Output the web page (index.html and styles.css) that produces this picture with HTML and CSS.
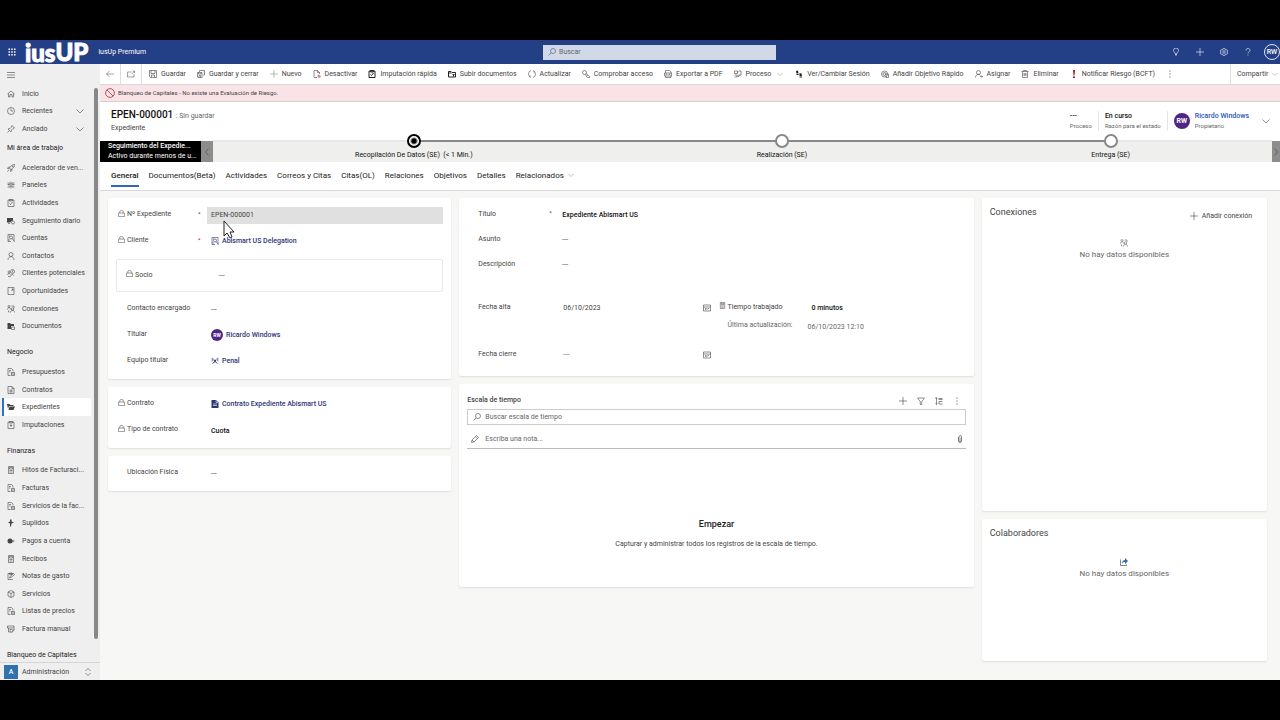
FILE: index.html
```html
<!DOCTYPE html>
<html lang="es">

<head>
    <meta charset="UTF-8">
    <meta name="viewport" content="width=device-width, initial-scale=1.0">
    <title>Expediente EPEN-000001 - iusUp Premium</title>
    <link rel="stylesheet" href="styles.css">
</head>

<body>
    <!-- Icon sprite -->
    <svg class="sprite" xmlns="http://www.w3.org/2000/svg">
        <symbol id="i-waffle" viewBox="0 0 16 16"><path class="solid" d="M1 1h3v3H1zM6.500 1h3v3h-3zM12 1h3v3h-3zM1 6.500h3v3H1zM6.500 6.500h3v3h-3zM12 6.500h3v3h-3zM1 12h3v3H1zM6.500 12h3v3h-3zM12 12h3v3h-3z"/></symbol>
        <symbol id="i-menu" viewBox="0 0 16 16"><path d="M0 3h16M0 8h16M0 13h16"/></symbol>
        <symbol id="i-down" viewBox="0 0 16 16"><path d="M1 5l7 7 7-7"/></symbol>
        <symbol id="i-left" viewBox="0 0 16 16"><path d="M11 1L5 8l6 7"/></symbol>
        <symbol id="i-right" viewBox="0 0 16 16"><path d="M5 1l6 7-6 7"/></symbol>
        <symbol id="i-updown" viewBox="0 0 16 16"><path d="M3 6l5-5 5 5M3 10l5 5 5-5"/></symbol>
        <symbol id="i-search" viewBox="0 0 16 16"><circle cx="10" cy="6" r="5"/><path d="M6.500 9.500L1 15"/></symbol>
        <symbol id="i-bulb" viewBox="0 0 16 16"><path d="M6 11c0-2-3-3-3-6a5 5 0 0 1 10 0c0 3-3 4-3 6zM6 13h4M7 15h2"/></symbol>
        <symbol id="i-plus" viewBox="0 0 16 16"><path d="M8 0v16M0 8h16"/></symbol>
        <symbol id="i-gear" viewBox="0 0 16 16"><circle cx="8" cy="8" r="2.500"/><path d="M6.500 1h3l.5 2 2 1 2-.5 1.500 2.500-1.500 2 1.500 2-1.500 2.500-2-.5-2 1-.5 2h-3l-.5-2-2-1-2 .5L.5 10 2 8 .5 6 2 3.500l2 .5 2-1z"/></symbol>
        <symbol id="i-help" viewBox="0 0 16 16"><path d="M4 5c0-6 8-5 8-.5C12 7.500 8 7.500 8 11M8 13v2"/></symbol>
        <symbol id="i-home" viewBox="0 0 16 16"><path d="M1 8l7-6 7 6M3 7v7h3v-5h4v5h3V7"/></symbol>
        <symbol id="i-clock" viewBox="0 0 16 16"><circle cx="8" cy="8" r="7"/><path d="M8 3v5h4"/></symbol>
        <symbol id="i-pin" viewBox="0 0 16 16"><path d="M10 1l5 5-3 1-3 3-1 4-6-6 4-1 3-3zM5 11l-4 4"/></symbol>
        <symbol id="i-rocket" viewBox="0 0 16 16"><path d="M15 1c-5 0-8 3-10 7l3 3c4-2 7-5 7-10zM6 6H3L1 9h4M10 10v3l-3 2v-4M4 11l-3 4"/><circle cx="11" cy="5" r="1"/></symbol>
        <symbol id="i-panels" viewBox="0 0 16 16"><path d="M1 4h5v3H1M15 4h-5v3h5M8 1v14M1 12h5V9M15 12h-5V9M3 7v2M13 7v2"/></symbol>
        <symbol id="i-clip" viewBox="0 0 16 16"><path d="M2 2h12v13H2zM5 1h6v3H5zM5 9l2 2 4-5"/></symbol>
        <symbol id="i-task" viewBox="0 0 16 16"><path d="M2 2h12v13H2zM5 1h6v3H5zM8 6v6M6 9h4"/></symbol>
        <symbol id="i-note" viewBox="0 0 16 16"><path d="M12 15H2V3h11M5 2h5v3H5zM5 12l1-3 7-6 2 2-7 6z"/></symbol>
        <symbol id="i-daily" viewBox="0 0 16 16"><path class="solid" d="M0 2h12v5a5 5 0 0 0-5 4H0z"/><circle cx="12" cy="11" r="3"/><path d="M2 13h4"/></symbol>
        <symbol id="i-account" viewBox="0 0 16 16"><path d="M8 15H2V1h12v14M4 4h2"/><circle cx="8" cy="7" r="3"/><path d="M10 9l5 6M2 12h4"/></symbol>
        <symbol id="i-person" viewBox="0 0 16 16"><circle cx="8" cy="5" r="4"/><path d="M2 16c0-9 12-9 12 0"/></symbol>
        <symbol id="i-lead" viewBox="0 0 16 16"><circle cx="11" cy="5" r="4"/><circle cx="4" cy="6" r="2"/><path d="M1 12c1-4 5-4 6-1M7 15c0-3 5-6 6-2M2 15h5M11 3v4"/></symbol>
        <symbol id="i-opp" viewBox="0 0 16 16"><path d="M2 1h12v14H2zM9 8l3-4M12 7V4H9"/></symbol>
        <symbol id="i-connect" viewBox="0 0 16 16"><circle cx="4" cy="3" r="2"/><path d="M1 9c0-5 6-5 6 0M9 2h5v4"/><circle cx="11" cy="8" r="2.500"/><path d="M7 15c0-6 8-6 8 0M3 11v3h2"/></symbol>
        <symbol id="i-folder" viewBox="0 0 16 16"><path class="solid" d="M1 2h5l2 2h6v4H8v6H1z"/><path d="M9 10h6v5H9z"/></symbol>
        <symbol id="i-upload" viewBox="0 0 16 16"><path d="M1 14V3h5l2 2h7v9zM1 6h6M11 13V8M9 10l2-2 2 2"/></symbol>
        <symbol id="i-files" viewBox="0 0 16 16"><path class="solid" d="M0 2h5l2 2h6v2H4l-2 6zM5 7h11l-3 7H3z"/></symbol>
        <symbol id="i-doclock" viewBox="0 0 16 16"><path d="M7 15H2V1h7l3 3v3M4 5h4M4 8h3M9 9h6v6H9zM9 12h6"/></symbol>
        <symbol id="i-doc" viewBox="0 0 16 16"><path d="M2 1h8l4 4v10H2zM10 1v4h4M5 8h6M5 10h6M5 12h6"/></symbol>
        <symbol id="i-calc" viewBox="0 0 16 16"><path d="M3 1h10v14H3zM5 3h6v3H5zM5 9h6M5 12h6"/></symbol>
        <symbol id="i-flag" viewBox="0 0 16 16"><path class="solid" d="M6 1h3v4l5 2-5 2-1 6H6V9L2 7l4-2z"/></symbol>
        <symbol id="i-coins" viewBox="0 0 16 16"><circle class="solid" cx="6" cy="8" r="5"/><path d="M9 8h6M12 6v5"/></symbol>
        <symbol id="i-box" viewBox="0 0 16 16"><path d="M8 1l6 3v8l-6 3-6-3V4zM2 4l6 3 6-3M8 7v8"/></symbol>
        <symbol id="i-manual" viewBox="0 0 16 16"><path d="M1 2h13v4H1zM3 6v8h5M5 9h6M5 12h3M15 7l-5 6-1 2 2-1 4-5"/></symbol>
        <symbol id="i-back" viewBox="0 0 16 16"><path d="M16 8H1M7 2L1 8l6 6"/></symbol>
        <symbol id="i-popout" viewBox="0 0 16 16"><path d="M9 4H1v10h13V8M10 8l5-6M11 2h4v4"/></symbol>
        <symbol id="i-save" viewBox="0 0 16 16"><path d="M1 1h14v14H3l-2-2zM4 1v6h8V1M5 15v-5h6v5"/></symbol>
        <symbol id="i-saveclose" viewBox="0 0 16 16"><path d="M5 1h10v9h-3M5 1v3M1 5h9v10H2l-1-1zM3 5v3h5V5M4 15v-4h3v4M12 4h1"/></symbol>
        <symbol id="i-deact" viewBox="0 0 16 16"><path d="M8 15H2V1h7l4 4v3M9 1v4h4"/><path class="red" d="M10 11a2.500 2.500 0 1 1 0 3zM10 10l4 5"/></symbol>
        <symbol id="i-refresh" viewBox="0 0 16 16"><path d="M10 15a7 7 0 0 0 1-13M12 5V1M6 1a7 7 0 0 0-1 13M4 11v4"/></symbol>
        <symbol id="i-key" viewBox="0 0 16 16"><circle cx="5" cy="5" r="4"/><path d="M8 7l7 6v2h-4l-5-6M9 12l3-2"/></symbol>
        <symbol id="i-pdf" viewBox="0 0 16 16"><path d="M3 6V1h8l3 3v2M1 6h14v6H1zM3 12v3h11v-3M4 10V8h2M8 8v2M11 10V8h2"/></symbol>
        <symbol id="i-process" viewBox="0 0 16 16"><path d="M1 2h6v5H1zM9 2h5v8H9M1 10h5v4H1M7 4h2M8 14l5-4M6 12h4"/></symbol>
        <symbol id="i-steps" viewBox="0 0 16 16"><path class="solid" d="M2 2l4-1 1 6H3zM3 8h4v2H3zM9 6l4 1 1 5H9zM9 13h5v2H9z"/></symbol>
        <symbol id="i-target" viewBox="0 0 16 16"><circle cx="7" cy="8" r="6"/><circle cx="7" cy="8" r="3"/><path d="M7 8h8v7h-5v-4"/></symbol>
        <symbol id="i-assign" viewBox="0 0 16 16"><circle cx="7" cy="5" r="4"/><path d="M1 15c0-7 8-8 10-4M10 13h5M13 11l2 2-2 2"/></symbol>
        <symbol id="i-trash" viewBox="0 0 16 16"><path d="M1 3h14M5 3V1h6v2M3 3v12h10V3M6 6v6M8 6v6M10 6v6"/></symbol>
        <symbol id="i-alert" viewBox="0 0 16 16"><path class="redfill" d="M6 0h4L9 11H7zM6 13h4v3H6z"/></symbol>
        <symbol id="i-dots" viewBox="0 0 16 16"><path class="solid" d="M7 1h2v2H7zM7 7h2v2H7zM7 13h2v2H7z"/></symbol>
        <symbol id="i-block" viewBox="0 0 16 16"><circle cx="8" cy="8" r="7"/><path d="M3 3l10 10"/></symbol>
        <symbol id="i-lock" viewBox="0 0 16 16"><path d="M1 7h14v8H1zM4 7V4q0-3 4-3t4 3v3"/></symbol>
        <symbol id="i-team" viewBox="0 0 16 16"><circle cx="3" cy="4" r="1.500"/><circle cx="13" cy="4" r="1.500"/><circle class="solid" cx="8" cy="7" r="2"/><path d="M1 8l3-1M15 8l-3-1M3 14l3-4h4l3 4M5 6l6 5M11 6l-6 5"/></symbol>
        <symbol id="i-contract" viewBox="0 0 16 16"><path class="solid" d="M1 0h9l5 5v11H1z"/><path class="knock" d="M4 8h8M4 11h8M10 1v4h4"/></symbol>
        <symbol id="i-calendar" viewBox="0 0 16 16"><path d="M1 2h14v12H1zM1 6h14M4 9h2M7 9h2M10 9h2M4 11h2M7 11h2"/></symbol>
        <symbol id="i-filter" viewBox="0 0 16 16"><path d="M1 2h14L9.500 9v6h-3V9z"/></symbol>
        <symbol id="i-sort" viewBox="0 0 16 16"><path d="M3 1v14M1 13l2 2 2-2M0 2h5M7 3h8M7 5h8M8 9h7M8 14h7M8 9v5"/></symbol>
        <symbol id="i-pencil" viewBox="0 0 16 16"><path d="M1 15l1-5 9-9 4 4-9 9zM9 3l4 4M2 10l4 4"/></symbol>
        <symbol id="i-attach" viewBox="0 0 16 16"><path d="M5 4v8q0 3 3 3t3-3V4q0-3-2.500-3T6 4v7q0 2 2 2t2-2V5"/></symbol>
        <symbol id="i-share" viewBox="0 0 16 16"><path class="dark" d="M1 3v12h12v-2"/><path class="solid" d="M4 12c0-6 3-8 6-8V0l6 6-6 6V8c-3 0-5 1-6 4z"/></symbol>
    </svg>

    <div class="app">
        <header class="topbar">
            <div class="brand">
                <button class="icon-btn" type="button" aria-label="Aplicaciones"><svg class="icon"><use href="#i-waffle"/></svg></button>
                <a class="logo" href="#">ius<span class="logo-up">Up</span></a>
                <a class="app-name" href="#">iusUp Premium</a>
            </div>
            <label class="global-search">
                <svg class="icon"><use href="#i-search"/></svg>
                <input type="search" placeholder="Buscar" aria-label="Buscar">
            </label>
            <div class="top-actions">
                <button class="icon-btn" type="button" aria-label="Novedades"><svg class="icon"><use href="#i-bulb"/></svg></button>
                <button class="icon-btn" type="button" aria-label="Crear"><svg class="icon"><use href="#i-plus"/></svg></button>
                <button class="icon-btn" type="button" aria-label="Ajustes"><svg class="icon"><use href="#i-gear"/></svg></button>
                <button class="icon-btn" type="button" aria-label="Ayuda"><svg class="icon"><use href="#i-help"/></svg></button>
                <button class="user" type="button">RW</button>
            </div>
        </header>

        <aside class="sidebar">
            <div class="sidebar-scroll">
                <nav class="menu">
                    <button class="menu-toggle" type="button" aria-label="Menú"><svg class="icon"><use href="#i-menu"/></svg></button>
                    <a href="#"><svg class="icon"><use href="#i-home"/></svg><span>Inicio</span></a>
                    <a href="#"><svg class="icon"><use href="#i-clock"/></svg><span>Recientes</span><svg class="icon more"><use href="#i-down"/></svg></a>
                    <a href="#"><svg class="icon"><use href="#i-pin"/></svg><span>Anclado</span><svg class="icon more"><use href="#i-down"/></svg></a>
                    <h2>Mi área de trabajo</h2>
                    <a href="#"><svg class="icon"><use href="#i-rocket"/></svg><span>Acelerador de ven...</span></a>
                    <a href="#"><svg class="icon"><use href="#i-panels"/></svg><span>Paneles</span></a>
                    <a href="#"><svg class="icon"><use href="#i-clip"/></svg><span>Actividades</span></a>
                    <a href="#"><svg class="icon"><use href="#i-daily"/></svg><span>Seguimiento diario</span></a>
                    <a href="#"><svg class="icon"><use href="#i-account"/></svg><span>Cuentas</span></a>
                    <a href="#"><svg class="icon"><use href="#i-person"/></svg><span>Contactos</span></a>
                    <a href="#"><svg class="icon"><use href="#i-lead"/></svg><span>Clientes potenciales</span></a>
                    <a href="#"><svg class="icon"><use href="#i-opp"/></svg><span>Oportunidades</span></a>
                    <a href="#"><svg class="icon"><use href="#i-connect"/></svg><span>Conexiones</span></a>
                    <a href="#"><svg class="icon"><use href="#i-folder"/></svg><span>Documentos</span></a>
                    <h2 class="spaced">Negocio</h2>
                    <a href="#"><svg class="icon"><use href="#i-doclock"/></svg><span>Presupuestos</span></a>
                    <a href="#"><svg class="icon"><use href="#i-doc"/></svg><span>Contratos</span></a>
                    <a class="active" href="#"><svg class="icon"><use href="#i-files"/></svg><span>Expedientes</span></a>
                    <a href="#"><svg class="icon"><use href="#i-task"/></svg><span>Imputaciones</span></a>
                    <h2 class="spaced">Finanzas</h2>
                    <a href="#"><svg class="icon"><use href="#i-calc"/></svg><span>Hitos de Facturaci...</span></a>
                    <a href="#"><svg class="icon"><use href="#i-doclock"/></svg><span>Facturas</span></a>
                    <a href="#"><svg class="icon"><use href="#i-doclock"/></svg><span>Servicios de la fac...</span></a>
                    <a href="#"><svg class="icon"><use href="#i-flag"/></svg><span>Suplidos</span></a>
                    <a href="#"><svg class="icon"><use href="#i-coins"/></svg><span>Pagos a cuenta</span></a>
                    <a href="#"><svg class="icon"><use href="#i-calc"/></svg><span>Recibos</span></a>
                    <a href="#"><svg class="icon"><use href="#i-note"/></svg><span>Notas de gasto</span></a>
                    <a href="#"><svg class="icon"><use href="#i-box"/></svg><span>Servicios</span></a>
                    <a href="#"><svg class="icon"><use href="#i-doclock"/></svg><span>Listas de precios</span></a>
                    <a href="#"><svg class="icon"><use href="#i-manual"/></svg><span>Factura manual</span></a>
                    <h2 class="last">Blanqueo de Capitales</h2>
                </nav>
                <div class="scroll-thumb"></div>
            </div>
            <button class="area" type="button">
                <span class="area-badge">A</span>
                <span class="area-name">Administración</span>
                <svg class="icon"><use href="#i-updown"/></svg>
            </button>
        </aside>

        <main class="main">
            <div class="commands">
                <button class="nav-btn" type="button" aria-label="Atrás"><svg class="icon"><use href="#i-back"/></svg></button>
                <button class="nav-btn" type="button" aria-label="Abrir en ventana nueva"><svg class="icon"><use href="#i-popout"/></svg></button>
                <div class="command-list">
                    <button type="button"><svg class="icon"><use href="#i-save"/></svg>Guardar</button>
                    <button type="button"><svg class="icon"><use href="#i-saveclose"/></svg>Guardar y cerrar</button>
                    <button type="button"><svg class="icon green"><use href="#i-plus"/></svg>Nuevo</button>
                    <button type="button"><svg class="icon"><use href="#i-deact"/></svg>Desactivar</button>
                    <button type="button"><svg class="icon strong"><use href="#i-clip"/></svg>Imputación rápida</button>
                    <button type="button"><svg class="icon strong"><use href="#i-upload"/></svg>Subir documentos</button>
                    <button type="button"><svg class="icon"><use href="#i-refresh"/></svg>Actualizar</button>
                    <button type="button"><svg class="icon"><use href="#i-key"/></svg>Comprobar acceso</button>
                    <button type="button"><svg class="icon"><use href="#i-pdf"/></svg>Exportar a PDF</button>
                    <button type="button"><svg class="icon"><use href="#i-process"/></svg>Proceso<svg class="icon chevron"><use href="#i-down"/></svg></button>
                    <button type="button"><svg class="icon strong"><use href="#i-steps"/></svg>Ver/Cambiar Sesión</button>
                    <button type="button"><svg class="icon"><use href="#i-target"/></svg>Añadir Objetivo Rápido</button>
                    <button type="button"><svg class="icon"><use href="#i-assign"/></svg>Asignar</button>
                    <button type="button"><svg class="icon"><use href="#i-trash"/></svg>Eliminar</button>
                    <button type="button"><svg class="icon"><use href="#i-alert"/></svg>Notificar Riesgo (BCFT)</button>
                    <button type="button" aria-label="Más comandos"><svg class="icon"><use href="#i-dots"/></svg></button>
                </div>
                <button class="share" type="button">Compartir<svg class="icon chevron"><use href="#i-down"/></svg></button>
            </div>

            <div class="notice">
                <svg class="icon"><use href="#i-block"/></svg>
                <span>Blanqueo de Capitales - No existe una Evaluación de Riesgo.</span>
            </div>

            <div class="record">
                <div class="record-title">
                    <h1>EPEN-000001 <small>: Sin guardar</small></h1>
                    <p>Expediente</p>
                </div>
                <div class="fact"><strong>---</strong><span>Proceso</span></div>
                <div class="fact"><strong>En curso</strong><span>Razón para el estado</span></div>
                <div class="fact owner">
                    <span class="avatar">RW</span>
                    <div><a href="#">Ricardo Windows</a><span>Propietario</span></div>
                </div>
                <button class="icon-btn" type="button" aria-label="Más"><svg class="icon"><use href="#i-down"/></svg></button>
            </div>

            <div class="process">
                <div class="process-name">
                    <strong>Seguimiento del Expedie...</strong>
                    <span>Activo durante menos de u...</span>
                </div>
                <button class="process-prev" type="button" aria-label="Anterior"><svg class="icon"><use href="#i-left"/></svg></button>
                <ol class="stages">
                    <li class="current"><span class="dot"></span><span>Recopilación De Datos (SE) &nbsp;(&lt; 1 Min.)</span></li>
                    <li><span class="dot"></span><span>Realización (SE)</span></li>
                    <li><span class="dot"></span><span>Entrega (SE)</span></li>
                </ol>
                <button class="process-next" type="button" aria-label="Siguiente"><svg class="icon"><use href="#i-right"/></svg></button>
            </div>

            <nav class="tabs">
                <a class="active" href="#">General</a>
                <a href="#">Documentos(Beta)</a>
                <a href="#">Actividades</a>
                <a href="#">Correos y Citas</a>
                <a href="#">Citas(OL)</a>
                <a href="#">Relaciones</a>
                <a href="#">Objetivos</a>
                <a href="#">Detalles</a>
                <a href="#">Relacionados<svg class="icon chevron"><use href="#i-down"/></svg></a>
            </nav>

            <div class="content">
                <div class="column">
                    <section class="card">
                        <div class="field">
                            <svg class="icon"><use href="#i-lock"/></svg>
                            <label for="numero">Nº Expediente</label>
                            <span class="req">*</span>
                            <div class="locked">
                                <input type="text" id="numero" value="EPEN-000001" readonly>
                                <svg class="pointer" viewBox="0 0 12 19"><path d="M1 1v15l3-3 3 5 2-1-2-5h4z"/></svg>
                            </div>
                        </div>
                        <div class="field">
                            <svg class="icon"><use href="#i-lock"/></svg>
                            <span class="label">Cliente</span>
                            <span class="req red-text">*</span>
                            <a class="value" href="#"><svg class="icon"><use href="#i-account"/></svg>Abismart US Delegation</a>
                        </div>
                        <div class="field boxed">
                            <svg class="icon"><use href="#i-lock"/></svg>
                            <span class="label">Socio</span>
                            <span class="value">---</span>
                        </div>
                        <div class="field">
                            <span class="label">Contacto encargado</span>
                            <span class="value">---</span>
                        </div>
                        <div class="field">
                            <span class="label">Titular</span>
                            <a class="value" href="#"><span class="avatar small">RW</span>Ricardo Windows</a>
                        </div>
                        <div class="field">
                            <span class="label">Equipo titular</span>
                            <a class="value" href="#"><svg class="icon"><use href="#i-team"/></svg>Penal</a>
                        </div>
                    </section>
                    <section class="card">
                        <div class="field">
                            <svg class="icon"><use href="#i-lock"/></svg>
                            <span class="label">Contrato</span>
                            <a class="value" href="#"><svg class="icon"><use href="#i-contract"/></svg>Contrato Expediente Abismart US</a>
                        </div>
                        <div class="field">
                            <svg class="icon"><use href="#i-lock"/></svg>
                            <span class="label">Tipo de contrato</span>
                            <strong class="value">Cuota</strong>
                        </div>
                    </section>
                    <section class="card">
                        <div class="field">
                            <span class="label">Ubicación Física</span>
                            <span class="value">---</span>
                        </div>
                    </section>
                </div>

                <div class="column">
                    <section class="card compact">
                        <div class="field">
                            <span class="label">Título</span>
                            <span class="req">*</span>
                            <strong class="value">Expediente Abismart US</strong>
                        </div>
                        <div class="field">
                            <span class="label">Asunto</span>
                            <span class="value">---</span>
                        </div>
                        <div class="field">
                            <span class="label">Descripción</span>
                            <span class="value">---</span>
                        </div>
                        <div class="dates">
                            <div class="date-list">
                                <div class="field">
                                    <label for="alta">Fecha alta</label>
                                    <div class="date"><input type="text" id="alta" value="06/10/2023"><svg class="icon"><use href="#i-calendar"/></svg></div>
                                </div>
                                <div class="field">
                                    <label for="cierre">Fecha cierre</label>
                                    <div class="date"><input type="text" id="cierre" placeholder="---"><svg class="icon"><use href="#i-calendar"/></svg></div>
                                </div>
                            </div>
                            <div class="time-list">
                                <div class="field">
                                    <svg class="icon"><use href="#i-calc"/></svg>
                                    <span class="label">Tiempo trabajado</span>
                                    <strong class="value">0 minutos</strong>
                                </div>
                                <div class="field updated">
                                    <span class="label">Última actualización:</span>
                                    <span class="value">06/10/2023 12:10</span>
                                </div>
                            </div>
                        </div>
                    </section>

                    <section class="card timeline">
                        <div class="timeline-head">
                            <h3>Escala de tiempo</h3>
                            <button class="icon-btn" type="button" aria-label="Crear registro"><svg class="icon"><use href="#i-plus"/></svg></button>
                            <button class="icon-btn" type="button" aria-label="Filtrar"><svg class="icon"><use href="#i-filter"/></svg></button>
                            <button class="icon-btn" type="button" aria-label="Ordenar"><svg class="icon"><use href="#i-sort"/></svg></button>
                            <button class="icon-btn" type="button" aria-label="Más opciones"><svg class="icon"><use href="#i-dots"/></svg></button>
                        </div>
                        <label class="timeline-search">
                            <svg class="icon"><use href="#i-search"/></svg>
                            <input type="search" placeholder="Buscar escala de tiempo" aria-label="Buscar escala de tiempo">
                        </label>
                        <label class="timeline-note">
                            <svg class="icon"><use href="#i-pencil"/></svg>
                            <input type="text" placeholder="Escriba una nota..." aria-label="Escriba una nota">
                            <svg class="icon"><use href="#i-attach"/></svg>
                        </label>
                        <div class="timeline-empty">
                            <h4>Empezar</h4>
                            <p>Capturar y administrar todos los registros de la escala de tiempo.</p>
                        </div>
                    </section>
                </div>

                <div class="column">
                    <section class="card side connections">
                        <h3>Conexiones</h3>
                        <button class="add" type="button"><svg class="icon"><use href="#i-plus"/></svg>Añadir conexión</button>
                        <div class="empty"><svg class="icon"><use href="#i-connect"/></svg><p>No hay datos disponibles</p></div>
                    </section>
                    <section class="card side partners">
                        <h3>Colaboradores</h3>
                        <div class="empty"><svg class="icon blue"><use href="#i-share"/></svg><p>No hay datos disponibles</p></div>
                    </section>
                </div>
            </div>
        </main>
    </div>
</body>

</html>
```
FILE: styles.css
```css
* {
    box-sizing: border-box;
}

body {
    margin: 0;
    padding: 40px 0;
    min-height: 100vh;
    display: flex;
    background-color: #000;
    font-family: Roboto, "Segoe UI", sans-serif;
    font-size: 7px;
    line-height: 10px;
    color: #444;
}

h1, h2, h3, h4, p, ol {
    margin: 0;
    padding: 0;
    font-size: inherit;
    font-weight: normal;
}

strong {
    font-weight: 500;
}

a {
    color: inherit;
    text-decoration: none;
}

button, input {
    margin: 0;
    padding: 0;
    border: none;
    background: none;
    font: inherit;
    color: inherit;
    min-width: 0;
}

input {
    outline: none;
}

button {
    display: flex;
    align-items: center;
    justify-content: center;
    white-space: nowrap;
    cursor: pointer;
}

::placeholder {
    color: #666;
    opacity: 1;
}

/* Icons */
.sprite {
    display: none;
}

.icon {
    width: 8px;
    height: 8px;
    flex: none;
    fill: none;
    stroke: currentColor;
    stroke-width: 1.2;
}

.solid {
    fill: currentColor;
    stroke: none;
}

.red {
    stroke: #c8324a;
}

.redfill {
    fill: #a4141e;
    stroke: none;
}

.knock {
    stroke: #fff;
}

.dark {
    stroke: #333;
}

.green {
    color: #6fa287;
}

.blue {
    color: #2b6cb0;
}

.strong {
    color: #222;
    stroke-width: 2;
}

.chevron {
    width: 6px;
    height: 6px;
    color: #777;
}

.app {
    flex: 1;
    min-width: 0;
    display: grid;
    grid-template-columns: 100px minmax(0, 1fr);
    grid-template-rows: 24px 1fr;
    background-color: #f7f7f5;
}

/* Top bar */
.topbar {
    grid-column: 1 / -1;
    display: grid;
    grid-template-columns: 14fr 6fr 13fr;
    align-items: center;
    background-color: #233f85;
    color: #fff;
}

.brand {
    display: flex;
    align-items: center;
    padding-left: 8px;
}

.logo {
    margin: 0 10px 0 9px;
    font-family: Lato, sans-serif;
    font-size: 24px;
    font-weight: 900;
    line-height: 22px;
    -webkit-text-stroke: 1px #fff;
}

.logo-up {
    text-transform: uppercase;
    vertical-align: 1px;
}

.global-search {
    display: flex;
    align-items: center;
    gap: 3px;
    height: 15px;
    padding: 0 5px;
    background-color: #d1d8e8;
    color: #44557f;
}

.global-search input {
    flex: 1;
}

.top-actions {
    display: flex;
    justify-content: flex-end;
    align-items: center;
    gap: 16px;
}

.user {
    width: 16px;
    height: 16px;
    margin-left: -4px;
    border: 1px solid #dfe5f3;
    border-radius: 50%;
    font-weight: 500;
}

/* Sidebar */
.sidebar {
    display: flex;
    flex-direction: column;
    background-color: #efefef;
}

.sidebar-scroll {
    flex: 1;
    display: flex;
}

.menu {
    flex: 1;
    display: flex;
    flex-direction: column;
}

.menu-toggle {
    height: 21px;
    padding-left: 7px;
    justify-content: flex-start;
}

.menu a {
    flex: 1;
    display: flex;
    align-items: center;
    gap: 7px;
    margin: 0 3px 0 2px;
    padding-left: 5px;
    white-space: nowrap;
}

.menu a.active {
    padding-left: 3px;
    border-left: 2px solid #2f6fc4;
    background-color: #fff;
}

.more {
    margin: 0 7px 0 auto;
}

.menu h2 {
    height: 21px;
    padding-left: 7px;
    line-height: 21px;
    color: #222;
}

.menu h2.spaced {
    height: 28px;
    padding-top: 7px;
}

.menu h2.last {
    height: 24px;
    padding-top: 7px;
}

.scroll-thumb {
    width: 4px;
    margin: 24px 2px 23px 0;
    border-radius: 2px;
    background-color: #888;
}

.area {
    height: 18px;
    padding: 0 8px 0 4px;
    gap: 4px;
    border-top: 1px solid #d5d5d5;
}

.area-badge {
    width: 14px;
    height: 14px;
    line-height: 14px;
    background-color: #2f72ad;
    color: #fff;
    font-weight: 500;
}

.area-name {
    flex: 1;
    text-align: left;
}

/* Command bar */
.main {
    display: flex;
    flex-direction: column;
    min-width: 0;
}

.commands {
    display: flex;
    height: 21px;
    border-bottom: 1px solid #d8d8d8;
    background-color: #fff;
}

.nav-btn {
    width: 21px;
    border-right: 1px solid #ddd;
    color: #666;
}

.command-list {
    flex: 1;
    display: flex;
    gap: 11px;
    padding-left: 7px;
    overflow: hidden;
}

.command-list button {
    gap: 4px;
}

.command-list .chevron {
    margin: 0 1px 0 2px;
}

.share {
    width: 50px;
    gap: 4px;
    padding-left: 6px;
    justify-content: flex-start;
    border-left: 1px solid #ddd;
}

.notice {
    display: flex;
    align-items: center;
    gap: 3px;
    height: 17px;
    padding-left: 5px;
    border-bottom: 1px solid #dccdd0;
    background-color: #f9e3e6;
    font-size: 6px;
}

.notice .icon {
    width: 10px;
    height: 10px;
    color: #9b2335;
}

/* Record header */
.record {
    display: flex;
    align-items: center;
    height: 39px;
    padding: 0 10px 2px 0;
    background-color: #fff;
}

.record-title {
    flex: 1;
    padding-left: 11px;
}

.record h1 {
    font-size: 10px;
    line-height: 13px;
    font-weight: 500;
    color: #111;
}

.record small {
    font-size: 7px;
    font-weight: normal;
    color: #666;
}

.fact {
    padding: 0 6px;
    border-left: 1px solid #e5e5e5;
}

.record-title + .fact {
    border-left: none;
}

.fact strong,
.fact span,
.fact a {
    display: block;
}

.fact strong {
    color: #111;
}

.fact span {
    font-size: 6px;
    color: #666;
}

.owner {
    display: flex;
    align-items: center;
    gap: 5px;
    padding-right: 13px;
}

.owner a {
    color: #2a55b8;
    font-weight: 500;
}

.avatar,
.fact .avatar {
    width: 16px;
    height: 16px;
    border-radius: 50%;
    background-color: #4f2683;
    color: #fff;
    font-size: 7px;
    font-weight: bold;
    line-height: 16px;
    text-align: center;
}

.avatar.small {
    width: 12px;
    height: 12px;
    font-size: 5px;
    line-height: 12px;
}

/* Business process */
.process {
    display: flex;
    height: 21px;
    background-color: #efefee;
}

.process-name {
    width: 101px;
    padding: 0 8px;
    background-color: #000;
    color: #fff;
    white-space: nowrap;
}

.process-name strong,
.process-name span {
    display: block;
}

.process-prev {
    width: 12px;
    background-color: #8c8c8c;
}

.process-next {
    width: 8px;
    background-color: #8c8c8c;
}

.stages {
    flex: 1;
    display: flex;
    list-style: none;
    color: #111;
}

.stages li {
    flex: 1 1 auto;
    position: relative;
    display: flex;
    flex-direction: column;
    align-items: center;
}

.stages li::before,
.stages li::after {
    content: "";
    position: absolute;
    top: -1px;
    width: 50%;
    height: 2px;
    background-color: #888;
}

.stages li::before {
    left: 0;
}

.stages li::after {
    right: 0;
}

.stages li:first-child::before,
.stages li:last-child::after {
    background-color: #e8e8e8;
}

.dot {
    z-index: 1;
    width: 14px;
    height: 14px;
    margin: -7px 0 2px;
    border: 2px solid #888;
    border-radius: 50%;
    background-color: #fff;
}

.current .dot {
    border-color: #000;
    background: radial-gradient(circle, #000 2px, #fff 4px);
}

/* Tabs */
.tabs {
    display: flex;
    gap: 10px;
    height: 29px;
    padding-left: 11px;
    border-bottom: 1px solid #d8d8d8;
    background-color: #fff;
    font-size: 8px;
    color: #222;
}

.tabs a {
    height: 25px;
    line-height: 28px;
}

.tabs a.active {
    border-bottom: 2px solid #3466b8;
    font-weight: 500;
}

.tabs .chevron {
    margin-left: 4px;
}

/* Form */
.content {
    flex: 1;
    display: grid;
    grid-template-columns: 343fr 514fr 285fr;
    gap: 8px;
    align-items: start;
    padding: 7px 13px 18px 8px;
}

.column {
    display: flex;
    flex-direction: column;
    gap: 8px;
    min-width: 0;
}

.card {
    padding: 4px 8px 5px;
    border-radius: 2px;
    background-color: #fff;
    box-shadow: 0 1px 2px rgba(0, 0, 0, 0.1);
}

.field {
    display: grid;
    grid-template-columns: 9px 71px 9px minmax(0, 1fr);
    align-items: center;
    height: 26px;
    padding-left: 2px;
}

.field > .icon {
    width: 7px;
    height: 7px;
    margin-bottom: 4px;
    grid-column: 1;
}

.field > label,
.field > .label {
    grid-column: 2;
    padding-bottom: 2px;
    white-space: nowrap;
}

.req {
    grid-column: 3;
    padding-bottom: 3px;
    font-size: 6px;
}

.red-text {
    color: #b3202c;
}

.value,
.locked,
.date {
    grid-column: 4;
}

.value {
    display: flex;
    align-items: center;
    gap: 3px;
    padding: 1px 0 0 4px;
    white-space: nowrap;
}

strong.value {
    color: #111;
}

a.value {
    padding-top: 0;
    color: #2c3675;
    font-weight: 500;
}

.locked {
    position: relative;
}

.locked input {
    width: 100%;
    height: 17px;
    padding-left: 4px;
    background-color: #e0e0e0;
}

.pointer {
    position: absolute;
    left: 16px;
    top: 13px;
    width: 12px;
    height: 19px;
    fill: #fff;
    stroke: #222;
}

.boxed {
    height: 33px;
    margin: 5px 0 4px;
    padding-left: 9px;
    border: 1px solid #e8e8e8;
    border-radius: 2px;
}

.compact .field {
    height: 25px;
}

.dates {
    display: grid;
    grid-template-columns: 1fr 1fr;
    margin-top: 18px;
    padding-bottom: 4px;
}

.date-list {
    display: grid;
    gap: 22px;
}

.date {
    display: flex;
    align-items: center;
    padding: 0 6px 0 5px;
}

.date input {
    flex: 1;
}

.compact .updated {
    height: 12px;
    color: #666;
}

.updated .value {
    padding-left: 0;
}

/* Timeline */
.timeline {
    height: 203px;
    padding: 8px;
}

.timeline-head {
    display: flex;
    gap: 10px;
    height: 17px;
    padding-right: 5px;
}

.timeline-head h3 {
    flex: 1;
    line-height: 17px;
    font-weight: 500;
}

.timeline-search,
.timeline-note {
    display: flex;
    align-items: center;
    gap: 4px;
    padding-left: 5px;
}

.timeline-search {
    height: 16px;
    border: 1px solid #ccc;
}

.timeline-note {
    height: 24px;
    padding: 4px 2px 0 4px;
    gap: 6px;
    border-bottom: 1px solid #bbb;
}

.timeline-search input,
.timeline-note input {
    flex: 1;
}

.timeline-empty {
    padding-top: 68px;
    text-align: center;
}

.timeline-empty h4 {
    margin-bottom: 8px;
    font-size: 9px;
    line-height: 14px;
    font-weight: 500;
    color: #222;
}

/* Side cards */
.side {
    padding: 8px;
}

.side h3 {
    font-size: 9px;
    line-height: 13px;
}

.connections {
    height: 313px;
}

.partners {
    height: 142px;
}

.add {
    gap: 4px;
    margin-left: auto;
    padding-right: 7px;
    height: 10px;
    margin-top: -8px;
}

.empty {
    display: flex;
    flex-direction: column;
    align-items: center;
    padding-top: 18px;
    font-size: 8px;
    color: #666;
}

.empty p {
    line-height: 16px;
}
```
